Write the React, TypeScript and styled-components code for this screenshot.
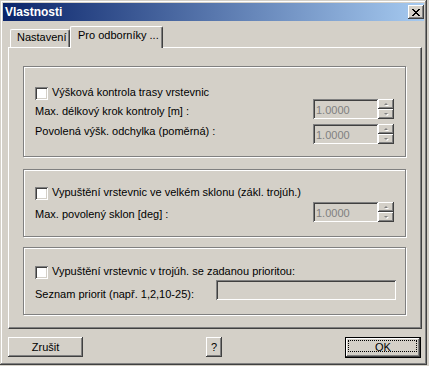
import React from "react";
import styled, { createGlobalStyle } from "styled-components";

const GlobalStyle = createGlobalStyle`
    body {
        margin: 0;
        background: #d4d0c8;
        font-family: "Liberation Sans", Arial, sans-serif;
        font-size: 11px;
        color: #000;
    }
`;

const raised = `
    box-shadow: inset -1px -1px #404040, inset 1px 1px #fff, inset -2px -2px #808080, inset 2px 2px #d4d0c8;
`;
const sunken = `
    box-shadow: inset 1px 1px #808080, inset -1px -1px #fff, inset 2px 2px #404040, inset -2px -2px #d4d0c8;
`;

const Window = styled.div`
    width: 427px;
    height: 365px;
    box-sizing: border-box;
    padding: 3px;
    background: #d4d0c8;
    box-shadow: inset -1px -1px #404040, inset 1px 1px #d4d0c8, inset -2px -2px #808080, inset 2px 2px #fff;
    display: flex;
    flex-direction: column;
`;
const TitleBar = styled.div`
    height: 18px;
    flex: none;
    display: flex;
    align-items: center;
    justify-content: space-between;
    padding-left: 2px;
    background: linear-gradient(to right, #0a246a, #a6caf0);
`;
const Title = styled.span`
    color: #fff;
    font-weight: bold;
    font-size: 12px;
    line-height: 14px;
`;
const CloseButton = styled.div`
    width: 16px;
    height: 14px;
    display: flex;
    align-items: center;
    justify-content: center;
    background: #d4d0c8;
    ${raised}
`;

const TabRow = styled.div`
    height: 21px;
    margin-top: 5px;
    padding-left: 7px;
    display: flex;
    align-items: flex-end;
    position: relative;
    z-index: 1;
`;
const Tab = styled.div<{ $active?: boolean }>`
    box-sizing: border-box;
    width: ${p => (p.$active ? 93 : 60)}px;
    height: ${p => (p.$active ? 22 : 18)}px;
    margin-bottom: ${p => (p.$active ? -1 : 0)}px;
    padding: ${p => (p.$active ? "2px 0 0 7px" : "1px 0 0 6px")};
    line-height: 13px;
    background: #d4d0c8;
    border: 1px solid #fff;
    border-bottom: none;
    border-right-color: #404040;
    border-radius: 2px 2px 0 0;
    box-shadow: inset -1px 0 #808080;
    white-space: nowrap;
`;

const Panel = styled.div`
    box-sizing: border-box;
    width: 414px;
    height: 282px;
    margin-left: 5px;
    padding: 18px 15px 13px 14px;
    border: 1px solid #fff;
    border-right-color: #404040;
    border-bottom-color: #404040;
    box-shadow: inset -1px -1px #808080;
    display: flex;
    flex-direction: column;
`;
const GroupBox = styled.div<{ $top: number; $bottom: number; $gap?: number }>`
    margin-top: ${p => p.$gap ?? 0}px;
    padding: ${p => p.$top}px 11px ${p => p.$bottom}px 11px;
    border: 1px solid #808080;
    box-shadow: inset 1px 1px #fff, 1px 1px #fff;
    display: flex;
    flex-direction: column;
`;
const CheckRow = styled.div`
    height: 13px;
    display: flex;
    align-items: center;
    gap: 4px;
    span {
        line-height: 13px;
        margin-top: -2px;
        white-space: nowrap;
    }
`;
const CheckBox = styled.div`
    width: 13px;
    height: 13px;
    flex: none;
    background: #fff;
    ${sunken}
`;
const FieldRow = styled.div<{ $gap: number }>`
    height: 20px;
    margin-top: ${p => p.$gap}px;
    display: flex;
    align-items: flex-start;
`;
const Label = styled.span<{ $drop: number }>`
    flex: 1;
    padding-top: ${p => p.$drop}px;
    line-height: 13px;
    white-space: nowrap;
`;
const Spin = styled.div`
    display: flex;
`;
const SpinInput = styled.div`
    box-sizing: border-box;
    width: 65px;
    height: 20px;
    padding: 1px 0 0 3px;
    display: flex;
    align-items: center;
    color: #808080;
    background: #d4d0c8;
    ${sunken}
`;
const SpinButtons = styled.div`
    display: flex;
    flex-direction: column;
`;
const SpinButton = styled.div<{ $down?: boolean }>`
    width: 16px;
    height: 10px;
    display: flex;
    align-items: center;
    justify-content: center;
    background: #d4d0c8;
    box-shadow: inset -1px -1px #404040, inset 1px 1px #fff, inset -2px -2px #808080;
    &::after {
        content: "";
        width: 0;
        height: 0;
        margin-top: ${p => (p.$down ? 0 : -1)}px;
        border-left: 2px solid transparent;
        border-right: 2px solid transparent;
        ${p => (p.$down ? "border-top" : "border-bottom")}: 2px solid #808080;
        filter: drop-shadow(1px 1px 0 #fff);
    }
`;
const TextInput = styled.div`
    width: 180px;
    height: 20px;
    margin-right: -2px;
    background: #d4d0c8;
    ${sunken}
`;

const ButtonRow = styled.div`
    margin-top: 8px;
    padding: 0 3px 0 5px;
    display: flex;
    justify-content: space-between;
    align-items: flex-start;
`;
const Button = styled.div<{ $width: number; $default?: boolean }>`
    box-sizing: border-box;
    width: ${p => p.$width}px;
    height: ${p => (p.$default ? 21 : 20)}px;
    display: flex;
    align-items: center;
    justify-content: center;
    line-height: 13px;
    background: #d4d0c8;
    position: relative;
    ${p => (p.$default ? "border: 1px solid #000;" : "")}
    ${raised}
    ${p =>
        p.$default
            ? `&::after {
                content: "";
                position: absolute;
                inset: 2px 3px 5px 2px;
                border: 1px dotted #000;
            }`
            : ""}
`;

const CloseIcon = () => (
    <svg width="8" height="7" viewBox="0 0 8 7" shapeRendering="crispEdges">
        <path
            d="M0 0h2v1H0zM6 0h2v1H6zM1 1h2v1H1zM5 1h2v1H5zM2 2h4v1H2zM3 3h2v1H3zM2 4h4v1H2zM1 5h2v1H1zM5 5h2v1H5zM0 6h2v1H0zM6 6h2v1H6z"
            fill="#000"
        />
    </svg>
);

const SpinEdit: React.FC<{ value: string }> = ({ value }) => (
    <Spin>
        <SpinInput>{value}</SpinInput>
        <SpinButtons>
            <SpinButton />
            <SpinButton $down />
        </SpinButtons>
    </Spin>
);

const App: React.FC = () => {
    return (
        <>
            <GlobalStyle />
            <Window>
                <TitleBar>
                    <Title>Vlastnosti</Title>
                    <CloseButton>
                        <CloseIcon />
                    </CloseButton>
                </TitleBar>
                <TabRow>
                    <Tab>Nastavení</Tab>
                    <Tab $active>Pro odborníky ...</Tab>
                </TabRow>
                <Panel>
                    <GroupBox $top={20} $bottom={12}>
                        <CheckRow>
                            <CheckBox />
                            <span>Výšková kontrola trasy vrstevnic</span>
                        </CheckRow>
                        <FieldRow $gap={-1}>
                            <Label $drop={6}>Max. délkový krok kontroly [m] :</Label>
                            <SpinEdit value="1.0000" />
                        </FieldRow>
                        <FieldRow $gap={5}>
                            <Label $drop={1}>Povolená výšk. odchylka (poměrná) :</Label>
                            <SpinEdit value="1.0000" />
                        </FieldRow>
                    </GroupBox>
                    <GroupBox $top={17} $bottom={14} $gap={12}>
                        <CheckRow>
                            <CheckBox />
                            <span>Vypuštění vrstevnic ve velkém sklonu (zákl. trojúh.)</span>
                        </CheckRow>
                        <FieldRow $gap={2}>
                            <Label $drop={6}>Max. povolený sklon [deg] :</Label>
                            <SpinEdit value="1.0000" />
                        </FieldRow>
                    </GroupBox>
                    <GroupBox $top={18} $bottom={14} $gap={10}>
                        <CheckRow>
                            <CheckBox />
                            <span>Vypuštění vrstevnic v trojúh. se zadanou prioritou:</span>
                        </CheckRow>
                        <FieldRow $gap={1}>
                            <Label $drop={8}>Seznam priorit (např. 1,2,10-25):</Label>
                            <TextInput />
                        </FieldRow>
                    </GroupBox>
                </Panel>
                <ButtonRow>
                    <Button $width={75}>Zrušit</Button>
                    <Button $width={16}>?</Button>
                    <Button $width={76} $default>
                        OK
                    </Button>
                </ButtonRow>
            </Window>
        </>
    );
};

export default App;
